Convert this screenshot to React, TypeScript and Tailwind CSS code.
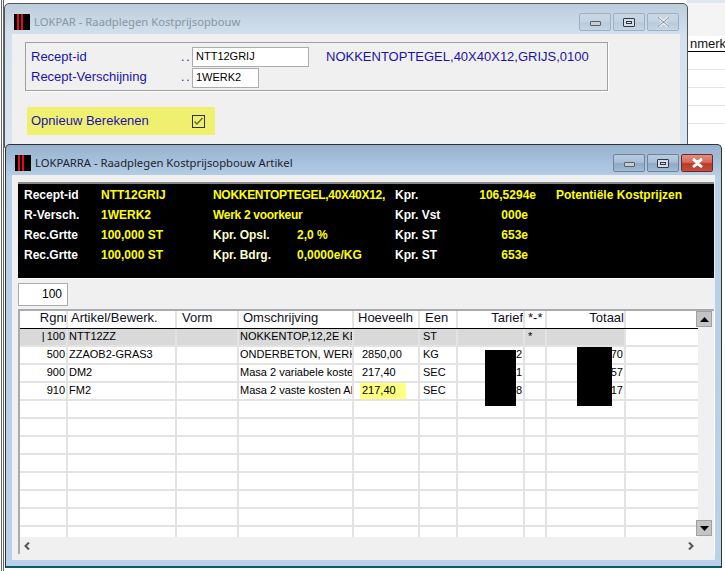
const rows = [
  { rg: '100', art: 'NTT12ZZ', oms: 'NOKKENTOP,12,2E KE', hv: '', een: 'ST', tar: '', st: '*', tot: '', sel: true },
  { rg: '500', art: 'ZZAOB2-GRAS3', oms: 'ONDERBETON, WERK', hv: '2850,00', een: 'KG', tar: '2', st: '', tot: '70' },
  { rg: '900', art: 'DM2', oms: 'Masa 2 variabele koster', hv: '217,40', een: 'SEC', tar: '1', st: '', tot: '57' },
  { rg: '910', art: 'FM2', oms: 'Masa 2 vaste kosten Al', hv: '217,40', een: 'SEC', tar: '8', st: '', tot: '17', mark: true },
];

const gridCols = 'grid grid-cols-[48px_109px_62px_115px_66px_38px_67px_22px_79px_1fr]';
const cell = 'border-r-[2px] border-[#e3e3e3] overflow-hidden whitespace-nowrap';

function AppIcon() {
  return (
    <svg width="16" height="16" viewBox="0 0 16 16" className="shrink-0">
      <rect width="16" height="16" fill="#000" />
      <rect x="3" width="2" height="16" fill="#e01010" />
      <rect x="7" width="2" height="16" fill="#e01010" />
    </svg>
  );
}

function CapButton({ kind, active }: { kind: 'min' | 'max' | 'close'; active: boolean }) {
  const bg =
    kind === 'close' && active
      ? 'border-[#6b2a2a] bg-[linear-gradient(#e28d80_0%,#d9695a_45%,#b63a28_55%,#c4503c_100%)]'
      : active
        ? 'border-[#6f8299] bg-[linear-gradient(#b9cde0_0%,#a7bfd8_45%,#8ea9c6_55%,#a3bcd6_100%)]'
        : 'border-[#9bb0c4] bg-[linear-gradient(#cad8e5_0%,#c3d2e1_50%,#b8cadb_55%,#c6d6e5_100%)]';
  return (
    <div className={`w-[32px] h-[18px] border rounded-[2px] flex items-center justify-center ${bg}`}>
      {kind === 'min' && <div className="w-[11px] h-[5px] mt-[3px] bg-[#c9ccd0] border border-[#56606c] rounded-[1px]" />}
      {kind === 'max' && (
        <div className="w-[12px] h-[9px] border border-[#2f3a46] bg-[#d5dee7] flex items-center justify-center rounded-[1px]">
          <div className="w-[6px] h-[3px] border border-[#2f3a46]" />
        </div>
      )}
      {kind === 'close' && (
        <svg width="13" height="10" viewBox="0 0 13 10">
          <path
            d="M2 1 L6.5 4 L11 1 M2 9 L6.5 6 L11 9 M2 1 L11 9 M11 1 L2 9"
            stroke={active ? '#fff' : '#e6ebf0'}
            strokeWidth="2.6"
            fill="none"
          />
          {!active && <path d="M1 0.5 L12 9.5 M12 0.5 L1 9.5" stroke="#4d5a66" strokeWidth="0.6" fill="none" />}
        </svg>
      )}
    </div>
  );
}

function Titlebar({ title, active }: { title: string; active: boolean }) {
  return (
    <div className="h-[30px] flex items-center pt-[6px] pl-[9px] pr-[8px] gap-[4px]">
      <AppIcon />
      <span
        className={`flex-1 text-[11.25px] font-['Noto_Sans',sans-serif] ${active ? 'text-[#1c2430]' : 'text-[#8a959f]'}`}
      >
        {title}
      </span>
      <div className="flex gap-[2px]">
        <CapButton kind="min" active={active} />
        <CapButton kind="max" active={active} />
        <CapButton kind="close" active={active} />
      </div>
    </div>
  );
}

function InfoRow({ a, b, c, d, e, f, g, short }: { a: string; b: string; c: string; d?: string; e: string; f: string; g?: string; short?: boolean }) {
  return (
    <div className="grid grid-cols-[77px_112px_84px_98px_80px_61px_20px_1fr] h-[20px] items-center whitespace-nowrap">
      <span className="text-white">{a}</span>
      <span className="text-[#ffff00]">{b}</span>
      {d === undefined ? (
        <span className="col-span-2 text-[#ffff00] tracking-[-0.3px]">{c}</span>
      ) : (
        <>
          <span className="text-[#ffffc8]">{c}</span>
          <span className="text-[#ffff00]">{d}</span>
        </>
      )}
      <span className="text-white">{e}</span>
      <span className={`text-[#ffff00] text-right ${short ? 'pr-[8px]' : ''}`}>{f}</span>
      <span />
      <span className="text-[#ffff00]">{g}</span>
    </div>
  );
}

export default function App() {
  return (
    <div className="relative w-[725px] h-[571px] overflow-hidden bg-white font-['Liberation_Sans',Arial,sans-serif]">
      {/* window behind, only its right side shows */}
      <div className="absolute left-[687px] top-0 w-[38px] h-[3px] bg-[#dfe9f3]" />
      <div className="absolute left-[687px] top-[3px] w-[38px] h-[141px] bg-white">
        <div className="h-[33px] bg-[#f4f4f4]" />
        <div className="h-[15px] pl-[3px] text-[13px] leading-[15px] text-[#111] overflow-hidden">nmerk</div>
        <div className="h-[1px] bg-black" />
        <div className="h-[18px] border-b border-[#e3e3e3]" />
        <div className="h-[18px] border-b border-[#e3e3e3]" />
        <div className="h-[18px] border-b border-[#e3e3e3]" />
        <div className="h-[18px] border-b border-[#e3e3e3]" />
      </div>
      <div className="absolute left-[1px] top-0 bottom-0 w-[3px] border-x border-[#666] bg-white" />

      {/* LOKPAR */}
      <div className="absolute left-[4px] top-[3px] w-[684px] h-[145px] border border-[#555] rounded-t-[5px] bg-[linear-gradient(#bccddc_0%,#d3e1ee_22%,#d8e5f1_100%)]">
        <Titlebar title="LOKPAR - Raadplegen Kostprijsopbouw" active={false} />
        <div className="mx-[7px] h-[110px] bg-[#f0f0f0] pt-[8px] pl-[13px]">
          <div className="relative w-[583px] h-[49px] border border-[#a0a0a0] shadow-[1px_1px_0_#fff] text-[13px] text-[#1a12b0]">
            <div className="flex items-center h-[24px] pt-[3px]">
              <span className="w-[148px] pl-[5px]">Recept-id</span>
              <span className="w-[18px] pl-[7px] tracking-[2px] text-[12px] leading-[22px]">..</span>
              <div className="w-[117px] h-[20px] bg-white border border-[#acacac] pl-[3px] text-[11px] leading-[17px] text-black">NTT12GRIJ</div>
              <span className="ml-[17px]">NOKKENTOPTEGEL,40X40X12,GRIJS,0100</span>
            </div>
            <div className="flex items-center h-[22px] -mt-[1px]">
              <span className="w-[148px] pl-[5px]">Recept-Verschijning</span>
              <span className="w-[18px] pl-[7px] tracking-[2px] text-[12px] leading-[22px]">..</span>
              <div className="w-[67px] h-[20px] mt-[2px] bg-white border border-[#acacac] pl-[3px] text-[11px] leading-[17px] text-black">1WERK2</div>
            </div>
          </div>
          <div className="mt-[16px] ml-[2px] w-[188px] h-[28px] bg-[#f0f070] flex items-center text-[13px] text-[#1a12b0]">
            <span className="w-[165px] pl-[4px]">Opnieuw Berekenen</span>
            <div className="w-[13px] h-[13px] border border-[#333] bg-[#f0f070] flex items-center justify-center">
              <svg width="11" height="11" viewBox="0 0 11 11">
                <path d="M1.5 5.5 L4 8 L9.5 2" stroke="#6a6a30" strokeWidth="1.4" fill="none" />
              </svg>
            </div>
          </div>
        </div>
      </div>

      {/* LOKPARRA */}
      <div className="absolute left-[5px] top-[144px] w-[717px] h-[424px] border border-[#333] border-b-2 border-b-[#0a5a6a] rounded-t-[5px] bg-[linear-gradient(#97b2cf_0%,#b7cfe8_8%,#b9d1ea_100%)]">
        <Titlebar title="LOKPARRA - Raadplegen Kostprijsopbouw Artikel" active />
        <div className="mx-[6px] h-[385px] bg-[#f0f0f0] pt-[7px] pl-[6px] pr-[1px]">
          {/* info panel */}
          <div className="h-[96px] bg-black border-t-2 border-[#888] shadow-[0_1px_0_#fff] pl-[6px] pt-[1px] text-[12px] font-bold">
            <InfoRow a="Recept-id" b="NTT12GRIJ" c="NOKKENTOPTEGEL,40X40X12," e="Kpr." f="106,5294e" g="Potentiële Kostprijzen" />
            <InfoRow a="R-Versch." b="1WERK2" c="Werk 2 voorkeur" e="Kpr. Vst" f="000e" short />
            <InfoRow a="Rec.Grtte" b="100,000 ST" c="Kpr. Opsl." d="2,0 %" e="Kpr. ST" f="653e" short />
            <InfoRow a="Rec.Grtte" b="100,000 ST" c="Kpr. Bdrg." d="0,0000e/KG" e="Kpr. ST" f="653e" short />
          </div>

          <div className="mt-[5px] w-[50px] h-[23px] bg-white border border-[#acacac] text-right pr-[5px] text-[12px] leading-[21px] text-black">100</div>

          {/* grid */}
          <div className="relative mt-[3px] h-[245px] w-[696px] border-t-2 border-l-2 border-[#a9a9b0] shadow-[1px_0_0_#fff]">
            <div className="relative h-[226px] w-[678px] overflow-hidden bg-white text-[11px] text-black">
              <div className={`${gridCols} h-[18px] border-b-[1px] border-black text-[13px] leading-[14px] text-[#10101c]`}>
                <div className={`${cell} text-right`}>
                  <span className="-mr-[2px] inline-block">Rgnr</span>
                </div>
                <div className={`${cell} pl-[3px]`}>Artikel/Bewerk.</div>
                <div className={`${cell} pl-[5px]`}>Vorm</div>
                <div className={`${cell} pl-[4px]`}>Omschrijving</div>
                <div className={`${cell} pl-[4px]`}>Hoeveelh</div>
                <div className={`${cell} pl-[5px]`}>Een</div>
                <div className={`${cell} text-right`}>Tarief</div>
                <div className={`${cell} pl-[3px]`}>*-*</div>
                <div className={`${cell} text-right border-r-0 pr-0`}>Totaal</div>
                <div />
              </div>
              {Array.from({ length: 12 }).map((_, i) => {
                const r = rows[i];
                return (
                  <div key={i} className={`${gridCols} h-[18px] border-b-[2px] border-[#e3e3e3] leading-[15px]`}>
                    <div className={`${cell} text-right pr-[1px] ${r?.sel ? 'bg-[#d9d9d9]' : ''}`}>
                      {r?.sel && <span className="mr-[2px]">|</span>}
                      {r?.rg}
                    </div>
                    <div className={`${cell} pl-[1px] ${r?.sel ? 'bg-[#d9d9d9]' : ''}`}>{r?.art}</div>
                    <div className={`${cell} ${r?.sel ? 'bg-[#d9d9d9]' : ''}`} />
                    <div className={`${cell} pl-[1px] ${r?.sel ? 'bg-[#d9d9d9]' : ''}`}>{r?.oms}</div>
                    <div className={`${cell} pl-[8px] relative ${r?.sel ? 'bg-[#d9d9d9]' : ''}`}>
                      {r?.mark && <div className="absolute left-[6px] top-0 w-[46px] h-[21px] bg-[#ffff80]" />}
                      <span className="relative">{r?.hv}</span>
                    </div>
                    <div className={`${cell} pl-[3px] ${r?.sel ? 'bg-[#d9d9d9]' : ''}`}>{r?.een}</div>
                    <div className={`${cell} text-right pr-[1px] ${r?.sel ? 'bg-[#d9d9d9]' : ''}`}>{r?.tar}</div>
                    <div className={`${cell} pl-[3px] ${r?.sel ? 'bg-[#d9d9d9]' : ''}`}>{r?.st}</div>
                    <div className={`${cell} text-right pr-[1px] ${r?.sel ? 'bg-[#d9d9d9]' : ''}`}>{r?.tot}</div>
                    <div />
                  </div>
                );
              })}
              {/* blacked out amounts */}
              <div className="absolute left-[465px] top-[39px] w-[31px] h-[56px] bg-black" />
              <div className="absolute left-[557px] top-[36px] w-[35px] h-[59px] bg-black" />
            </div>

            {/* vertical scrollbar */}
            <div className="absolute right-[2px] top-0 bottom-[18px] w-[16px] flex flex-col justify-between">
              <div className="h-[16px] bg-[#c4c4c4] border border-[#a0a0a0] flex items-center justify-center">
                <svg width="9" height="5" viewBox="0 0 9 5"><path d="M4.5 0 L9 5 H0 Z" fill="#000" /></svg>
              </div>
              <div className="h-[16px] bg-[#c4c4c4] border border-[#a0a0a0] flex items-center justify-center">
                <svg width="9" height="5" viewBox="0 0 9 5"><path d="M0 0 H9 L4.5 5 Z" fill="#000" /></svg>
              </div>
            </div>

            {/* horizontal scrollbar */}
            <div className="absolute left-0 bottom-[1px] w-[678px] h-[15px] bg-[#f0f0f0] flex items-center justify-between px-[4px]">
              <svg width="7" height="8" viewBox="0 0 7 8"><path d="M5 0.5 L1.5 4 L5 7.5" stroke="#555" strokeWidth="2" fill="none" /></svg>
              <svg width="7" height="8" viewBox="0 0 7 8"><path d="M2 0.5 L5.5 4 L2 7.5" stroke="#555" strokeWidth="2" fill="none" /></svg>
            </div>
          </div>
        </div>
      </div>
    </div>
  );
}
